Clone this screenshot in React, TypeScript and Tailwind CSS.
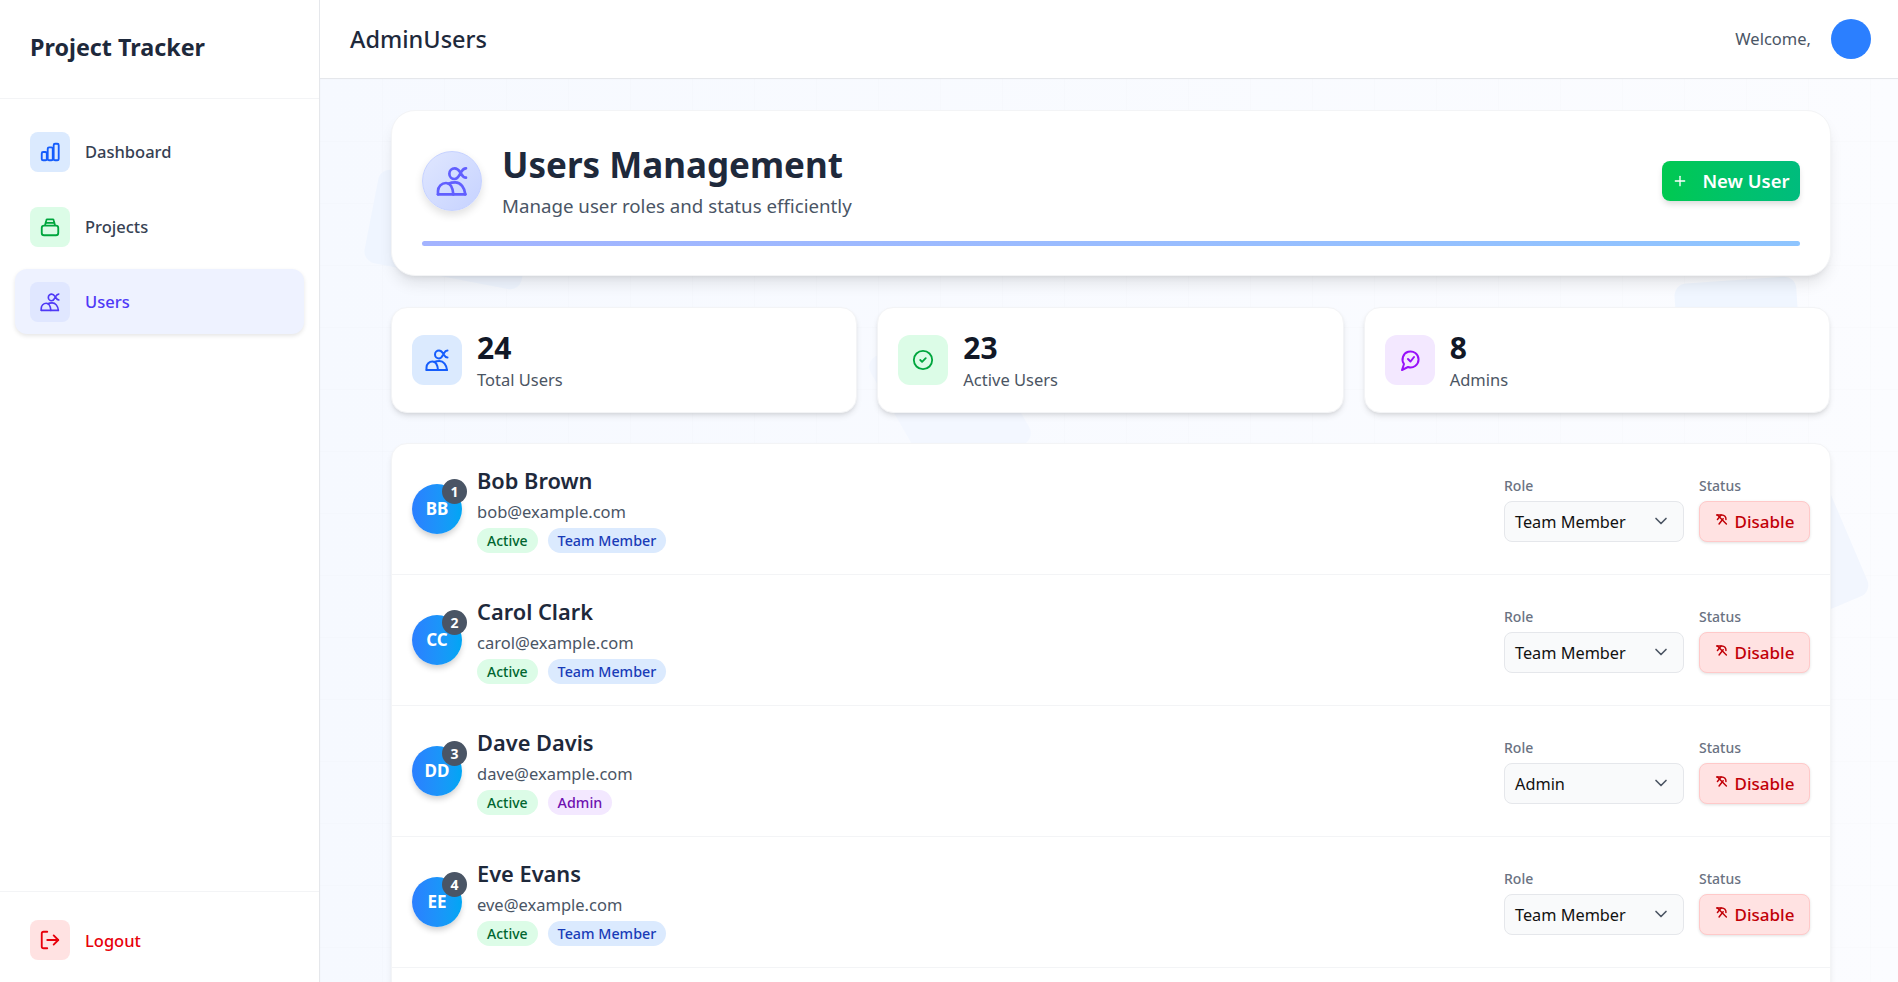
import React from 'react';
import { ChevronDown, CircleCheck, LogOut, Plus } from 'lucide-react';

const FONT = "font-['Noto_Sans','Open_Sans',sans-serif]";

// the odd "two domes and a loop" users glyph from the reference
const UsersGlyph: React.FC<{ className?: string }> = ({ className }) => (
  <svg viewBox="0 0 24 24" fill="none" stroke="currentColor" strokeWidth="2" strokeLinecap="round" strokeLinejoin="round" className={className}>
    <path d="M1.500 22h20.500" />
    <path d="M1.500 22v-2.500a6 6 0 0 1 6-6c3 0 5 3 5.500 8.500" />
    <path d="M9.500 14c1.500-.8 3-1 5-1 4 0 7 4 7.500 9" />
    <path d="M22.500 2.500c-2.500 0-3 1.800-4 3.500s-2 4.500-4.500 4.500a4 4 0 0 1 0-8c2.500 0 3.500 2 4.500 3.500s1.500 3.500 4 3.500" />
  </svg>
);

const BarsGlyph: React.FC<{ className?: string }> = ({ className }) => (
  <svg viewBox="0 0 24 24" fill="none" stroke="currentColor" strokeWidth="2" strokeLinejoin="round" className={className}>
    <rect x="3" y="12" width="5.500" height="9" rx="1.500" />
    <rect x="9.500" y="7" width="5.500" height="14" rx="1.500" />
    <rect x="16" y="3" width="5.500" height="18" rx="1.500" />
  </svg>
);

const BoxGlyph: React.FC<{ className?: string }> = ({ className }) => (
  <svg viewBox="0 0 24 24" fill="none" stroke="currentColor" strokeWidth="2" strokeLinejoin="round" className={className}>
    <rect x="3" y="10.500" width="18" height="10.500" rx="2.500" />
    <path d="M6.500 10.500 8 4.500a1 1 0 0 1 1-.800h6a1 1 0 0 1 1 .800l1.500 6" />
    <path d="M6.500 7.500h11" />
  </svg>
);

const ChatCheckGlyph: React.FC<{ className?: string }> = ({ className }) => (
  <svg viewBox="0 0 24 24" fill="none" stroke="currentColor" strokeWidth="2" strokeLinecap="round" strokeLinejoin="round" className={className}>
    <path d="M4 22l2-6A8 8 0 1 1 10 19z" />
    <path d="M10 11l2.500 2.500 3.500-4.500" />
  </svg>
);

const DisableGlyph: React.FC<{ className?: string }> = ({ className }) => (
  <svg viewBox="0 0 16 16" fill="none" stroke="currentColor" strokeWidth="1.800" strokeLinecap="round" strokeLinejoin="round" className={className}>
    <path d="M2 2.500h6.500a5 5 0 0 1 5 5.500" />
    <path d="M3 2.500l11 11" />
    <path d="M7.500 2.500 3 8" />
    <path d="M10 7l-5 6.500" />
  </svg>
);

const NavItem: React.FC<{ label: string; box: string; text: string; active?: boolean; children: React.ReactNode }> = ({ label, box, text, active, children }) => (
  <div className={`flex items-center gap-[15px] px-[15px] h-[65px] rounded-xl ${active ? 'bg-[#eef2ff] shadow-[0_2px_4px_rgba(0,0,0,0.1)]' : ''}`}>
    <div className={`w-10 h-10 rounded-lg flex items-center justify-center ${box}`}>{children}</div>
    <span className={`text-[16.500px] mt-[1px] font-medium ${text}`}>{label}</span>
  </div>
);

const StatCard: React.FC<{ value: string; label: string; box: string; children: React.ReactNode }> = ({ value, label, box, children }) => (
  <div className="flex-1 h-[106px] bg-white rounded-2xl border border-[#f3f4f6] shadow-[0_4px_6px_-1px_rgba(0,0,0,0.1),0_2px_4px_-2px_rgba(0,0,0,0.1)] flex items-center gap-[15px] px-5">
    <div className={`w-[50px] h-[50px] rounded-xl flex items-center justify-center ${box}`}>{children}</div>
    <div className="flex flex-col pt-[2px]">
      <span className="text-[30px] leading-[36px] font-bold text-[#111827]">{value}</span>
      <span className="text-[16.500px] leading-6 mt-[2px] text-[#4b5563]">{label}</span>
    </div>
  </div>
);

const users = [
  { name: 'Bob Brown', email: 'bob@example.com', initials: 'BB', role: 'Team Member' },
  { name: 'Carol Clark', email: 'carol@example.com', initials: 'CC', role: 'Team Member' },
  { name: 'Dave Davis', email: 'dave@example.com', initials: 'DD', role: 'Admin' },
  { name: 'Eve Evans', email: 'eve@example.com', initials: 'EE', role: 'Team Member' },
];

const UserRow: React.FC<{ user: (typeof users)[number]; index: number }> = ({ user, index }) => (
  <div className="h-[131px] flex items-center justify-between pl-5 pr-5 border-b border-[#f3f4f6]">
    <div className="flex items-center gap-[15px]">
      <div className="relative w-[50px] h-[50px] rounded-full bg-gradient-to-r from-[#2b7fff] to-[#00a6f4] shadow-[0_4px_6px_-1px_rgba(0,0,0,0.2)] flex items-center justify-center text-white font-bold text-[17px]">
        {user.initials}
        <span className="absolute -top-[5px] -right-[5px] w-[25px] h-[25px] rounded-full bg-[#4a5565] text-white text-sm font-bold flex items-center justify-center">{index + 1}</span>
      </div>
      <div className="flex flex-col mt-[3px]">
        <span className="text-[21.800px] leading-[26px] font-semibold text-[#1e293b]">{user.name}</span>
        <span className="text-[16.500px] leading-6 mt-[6px] text-[#4a5565]">{user.email}</span>
        <div className="flex gap-[10px] mt-[4px]">
          <span className="h-[25px] px-[10px] rounded-full bg-[#dcfce7] text-[#016630] text-sm font-medium flex items-center">Active</span>
          {user.role === 'Admin' ? (
            <span className="h-[25px] px-[10px] rounded-full bg-[#f3e8ff] text-[#6e11b0] text-[14.300px] font-medium flex items-center">Admin</span>
          ) : (
            <span className="h-[25px] px-[10px] rounded-full bg-[#dbeafe] text-[#193cb8] text-[14.300px] font-medium flex items-center">Team Member</span>
          )}
        </div>
      </div>
    </div>
    <div className="flex gap-[15px]">
      <div className="flex flex-col">
        <span className="text-sm leading-5 text-[#6a7282] font-medium mb-[5px]">Role</span>
        <div className="w-[180px] h-[41px] rounded-lg border border-[#e5e7eb] bg-[#f9fafb] flex items-center justify-between pl-[10px] pr-[12px] text-[#111] text-[16.300px]">
          <span className="mt-[1px]">{user.role}</span>
          <ChevronDown size={20} className="text-[#4b5563] -mt-[2px]" />
        </div>
      </div>
      <div className="flex flex-col">
        <span className="text-sm leading-5 text-[#6a7282] font-medium mb-[5px]">Status</span>
        <div className="w-[111px] h-[41px] rounded-lg border border-[#ffc9c9] bg-[#ffe2e2] shadow-[0_1px_3px_rgba(0,0,0,0.12)] flex items-center justify-center gap-[7px] text-[#c10007] text-[17px] font-medium">
          <DisableGlyph className="w-[13px] h-[13px] -mt-1" />
          Disable
        </div>
      </div>
    </div>
  </div>
);

export default function App() {
  return (
    <div className={`h-screen flex overflow-hidden bg-white ${FONT}`}>
      <aside className="w-[320px] shrink-0 bg-white border-r border-[#e5e7eb] flex flex-col">
        <div className="h-[99px] px-[30px] flex items-center border-b border-[#f3f4f6]">
          <h1 className="text-[23.300px] -mt-[3px] font-bold text-[#1e293b]">Project Tracker</h1>
        </div>
        <nav className="flex-1 flex flex-col px-[15px] pt-[20px] gap-[10px]">
          <NavItem label="Dashboard" box="bg-[#dbeafe]" text="text-[#364153]"><BarsGlyph className="w-[22px] h-[22px] text-[#155dfc]" /></NavItem>
          <NavItem label="Projects" box="bg-[#dcfce7]" text="text-[#364153]"><BoxGlyph className="w-[22px] h-[22px] text-[#00a63e]" /></NavItem>
          <NavItem label="Users" box="bg-[#e0e7ff]" text="text-[#4f39f6]" active><UsersGlyph className="w-5 h-5 text-[#4f39f6]" /></NavItem>
        </nav>
        <div className="h-[91px] border-t border-[#f3f4f6] px-[30px] pt-[28px] flex items-start gap-[15px]">
          <div className="w-10 h-10 rounded-lg bg-[#ffe2e2] flex items-center justify-center">
            <LogOut size={22} className="text-[#e7000b]" />
          </div>
          <span className="h-10 mt-[1px] flex items-center text-[16.500px] font-medium text-[#e7000b]">Logout</span>
        </div>
      </aside>

      <div className="flex-1 min-w-0 flex flex-col">
        <header className="h-[79px] shrink-0 bg-white border-b border-[#e5e7eb] flex items-center justify-between pl-[30px] pr-[27px]">
          <h2 className="text-[23.500px] mt-[1px] font-medium text-[#1e293b]">AdminUsers</h2>
          <div className="flex items-center gap-5">
            <span className="text-[16.500px] text-[#4a5565]">Welcome,</span>
            <div className="w-10 h-10 rounded-full bg-[#2b7fff]" />
          </div>
        </header>

        <main className="relative flex-1 min-h-0 overflow-hidden bg-[linear-gradient(rgba(0,0,0,0.008)_1px,transparent_1px),linear-gradient(90deg,rgba(0,0,0,0.008)_1px,transparent_1px),linear-gradient(90deg,#f6f9ff,#fbfcff)] bg-[length:62px_62px,62px_62px,100%_100%] pl-[71px] pr-[67px] pt-[31px]">
          {/* faint tilted shapes behind the cards */}
          <div className="absolute left-[50px] top-[103px] w-[160px] h-[95px] rotate-[11deg] rounded-xl bg-[#eff5ff]" />
          <div className="absolute left-[1357px] top-[201px] w-[122px] h-[100px] -rotate-[4deg] rounded-xl bg-[#f0f6ff]" />
          <div className="absolute left-[575px] top-[246px] w-[110px] h-[150px] -rotate-[30deg] rounded-xl bg-[#f3f7ff]" />
          <div className="absolute left-[1373px] top-[419px] w-[160px] h-[130px] -rotate-[23deg] rounded-xl bg-[#f2f6fe]" />

          <section className="relative h-[166px] bg-white rounded-3xl border border-[#f3f4f6] shadow-[0_10px_15px_-3px_rgba(0,0,0,0.1),0_4px_6px_-4px_rgba(0,0,0,0.1)] px-[30px] pt-[24px]">
            <div className="flex items-center justify-between h-[92px]">
              <div className="flex items-center gap-5">
                <div className="w-[60px] h-[60px] rounded-full border border-[#c6d2ff] bg-gradient-to-br from-[#e0e7ff] to-[#c6d2ff] shadow-[0_4px_8px_rgba(0,0,0,0.12)] flex items-center justify-center">
                  <UsersGlyph className="w-8 h-8 text-[#615fff]" />
                </div>
                <div className="flex flex-col mt-[1px]">
                  <span className="text-[35px] leading-[44px] font-bold text-[#1e293b]">Users Management</span>
                  <span className="text-[18.700px] leading-7 mt-[5px] text-[#4a5565]">Manage user roles and status efficiently</span>
                </div>
              </div>
              <div className="w-[138px] h-10 rounded-lg bg-gradient-to-r from-[#00c950] to-[#00bc7d] shadow-[0_4px_6px_-1px_rgba(0,0,0,0.15)] flex items-center justify-center gap-[14px] text-white text-[18.500px] font-semibold">
                <Plus size={16} />
                New User
              </div>
            </div>
            <div className="h-[5px] mt-[14px] rounded-full bg-gradient-to-r from-[#a3b3ff] to-[#8ec5ff]" />
          </section>

          <section className="relative flex gap-5 mt-[31px] mr-[1px]">
            <StatCard value="24" label="Total Users" box="bg-[#dbeafe]"><UsersGlyph className="w-6 h-6 text-[#155dfc]" /></StatCard>
            <StatCard value="23" label="Active Users" box="bg-[#dcfce7]"><CircleCheck size={22} className="text-[#00a63e]" /></StatCard>
            <StatCard value="8" label="Admins" box="bg-[#f3e8ff]"><ChatCheckGlyph className="w-6 h-6 text-[#9810fa]" /></StatCard>
          </section>

          <section className="relative mt-[30px] pb-[200px] bg-white rounded-2xl border border-[#f3f4f6] shadow-[0_4px_6px_-1px_rgba(0,0,0,0.1)]">
            {users.map((user, i) => (
              <UserRow key={user.email} user={user} index={i} />
            ))}
          </section>
        </main>
      </div>
    </div>
  );
}
